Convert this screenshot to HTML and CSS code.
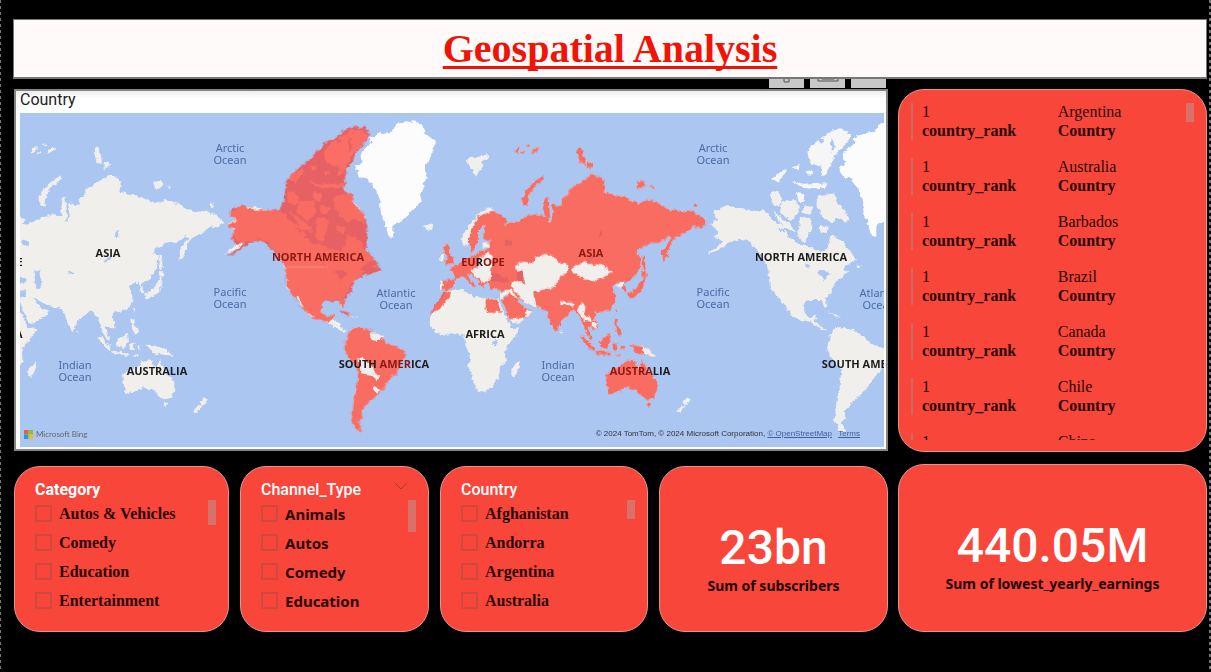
FILE: index.html
```
<!DOCTYPE html>
<html lang="en">
<head>
<meta charset="utf-8">
<title>Geospatial Analysis</title>
<link rel="stylesheet" href="styles.css">
</head>
<body>
<div class="page">
  <header class="banner"><h1>Geospatial Analysis</h1></header>
  <div class="tools">
    <button class="tool" type="button" aria-label="Filters"><svg viewBox="0 0 35 9"><path d="M15 0v3h5V0" fill="none" stroke="#555"/></svg></button>
    <button class="tool" type="button" aria-label="Focus mode"><svg viewBox="0 0 35 9"><path d="M8 0v2h20V0M12 0h12" fill="none" stroke="#555"/></svg></button>
    <button class="tool" type="button" aria-label="More options"></button>
  </div>
  <main class="board">
    <div class="left">
      <section class="map-panel">
        <h2 class="map-title">Country</h2>
        <div class="map">
          <svg class="map-art" viewBox="20 113 864 334" role="img" aria-label="World map with countries highlighted">
            <defs>
              <filter id="coast" x="20" y="113" width="864" height="334" filterUnits="userSpaceOnUse" color-interpolation-filters="sRGB">
                <feTurbulence type="fractalNoise" baseFrequency="0.22" numOctaves="3" seed="4"/>
                <feDisplacementMap in="SourceGraphic" scale="5" xChannelSelector="R" yChannelSelector="G"/>
              </filter>
              <path id="eurasia" d="M62 515L65 540 82 542 98 530 105 508 125 500 140 505 155 530 166 528 160 518 142 496 150 490 172 512 188 535 195 525 205 515 210 535 245 542 268 540 262 560 245 568 258 600 275 640 300 635 330 612 335 602 322 597 310 592 295 570 290 560 310 575 345 590 362 592 380 605 392 640 408 668 415 655 420 635 445 615 462 600 472 612 480 620 492 650 500 672 515 692 517 685 503 655 508 648 520 658 532 655 535 640 522 622 528 608 550 605 575 595 587 570 585 550 575 530 590 520 605 518 612 548 620 545 614 520 640 505 660 475 664 440 650 430 655 415 690 400 720 398 745 378 755 382 725 425 728 455 740 440 755 395 765 385 800 365 820 350 845 352 862 340 840 315 805 300 785 305 740 295 710 275 680 270 655 280 615 262 570 250 550 245 555 215 540 200 515 195 470 225 445 240 445 255 425 265 425 285 410 290 400 275 395 290 398 325 385 340 390 320 388 285 385 260 375 262 368 300 378 320 350 312 320 320 290 335 255 345 265 330 240 315 210 295 180 308 150 345 122 385 130 405 148 400 152 428 165 420 172 395 178 360 195 345 190 375 190 390 215 390 205 400 208 415 180 425 160 440 130 445 115 465 90 472 95 480 105 500 100 507Z"/>
              <path id="eurasia-isles" d="M70 408L85 405 90 430 104 455 98 462 75 462 80 440 70 425ZM470 125L480 108 490 125 488 135 498 150 495 165 478 155 475 140ZM500 155L520 160 515 172 500 178ZM312 290L304 270 316 243 345 213 370 197 373 208 346 228 327 257 325 288ZM648 215L670 213 680 225 655 237ZM685 226L702 230 700 238ZM822 281h8v8h-8ZM280 125L300 108 296 130ZM318 104L328 104 322 112ZM330 132L338 118 360 110 350 124ZM304 124h8v6h-8ZM620 553L640 543 655 528 665 510 680 498 674 515 667 542 650 557 628 566ZM662 495L670 480 682 492 672 504ZM667 438L675 438 677 480 668 478ZM586 598L592 596 590 610ZM579 625L590 628 590 645 600 655 606 670 595 676 585 650ZM480 678L495 682 524 715 520 724 505 712ZM525 722L575 728 572 738 528 730ZM537 695L555 682 570 672 573 692 562 713 542 711ZM577 700L597 698 587 708 592 720 579 720ZM626 703L650 706 665 710 690 720 707 738 680 734 650 730 640 718ZM600 705l8 4 4 10-8-2ZM585 736L605 732 600 740Z"/>
              <path id="australia" d="M555 795L575 782 600 770 615 755 635 748 648 755 645 768 660 775 668 745 675 765 690 790 712 815 712 840 700 865 680 868 660 855 650 838 640 840 620 832 595 845 565 850 562 830ZM678 878L694 878 686 895Z"/>
              <path id="south-america" d="M402 715L412 675 425 655 445 652 480 660 515 682 530 700 555 708 585 722 585 740 568 765 560 790 535 810 525 830 510 845 495 862 478 875 470 890 455 905 458 925 445 935 455 960 462 965 440 962 425 930 430 880 440 830 445 780 425 755 410 735Z"/>
              <g id="world">
                <g transform="translate(420 110) scale(.3333)">
                  <use href="#eurasia"/><use href="#eurasia-isles"/><use href="#australia"/>
                  <path d="M62 435L73 432 71 450 60 452ZM140 150L155 140 180 140 200 132 206 145 185 155 190 170 175 183 165 200 155 180 145 165ZM800 862L812 868 802 885 790 882ZM785 885L797 888 777 910 769 902ZM8 350L22 341 40 346 35 358 18 362Z"/>
                  <path d="M75 547L95 540 130 540 145 548 165 560 200 565 235 568 245 595 262 630 272 655 300 652 290 675 262 705 255 730 258 755 240 770 238 795 215 835 195 845 172 843 160 810 145 770 150 740 135 700 130 675 100 670 65 678 45 665 30 645 28 620 45 590 65 565ZM275 775L295 752 298 770 285 800 273 798ZM418 662l8 4-4 8Z"/>
                  <path class="sea" d="M210 513L205 500 222 490 245 498 270 512 250 518ZM290 485L308 482 308 500 316 522 304 538 292 518ZM216 692L232 690 228 708 218 704ZM256 388l22 8-4 12-20-4ZM540 360l8 2-4 18-8 2ZM500 450l26-14-4 10-20 10ZM390 486l24 2-10 6Z"/>
                </g>
                <g transform="translate(210 110) scale(.3333)">
                  <use href="#south-america"/>
                  <path class="ice" d="M438 170L460 155 450 145 455 125 485 100 480 85 510 70 545 65 560 42 600 32 635 40 645 70 678 95 670 120 655 150 645 175 650 205 640 215 645 235 630 250 635 275 610 300 575 335 550 345 550 380 535 380 525 340 512 310 510 270 498 240 470 205 445 200Z"/>
                </g>
                <g transform="translate(207 70) scale(.3333)">
                  <path d="M70 430L100 408 150 412 190 425 215 420 235 430 245 450 280 470 300 500 320 520 345 525 365 535 385 540 400 545 415 530 420 495 440 500 460 515 480 545 502 570 480 580 460 595 475 605 455 620 435 640 425 665 408 685 410 710 402 712 395 690 360 690 343 700 342 722 355 742 378 735 380 745 372 750 395 770 415 782 400 780 360 755 335 750 310 740 275 695 240 655 235 600 215 555 180 515 155 508 110 520 95 535 50 555 100 515 70 500 85 485 62 462 85 450Z"/>
                  <path class="arctic" d="M352 245L372 220 404 198 430 180 460 178 485 195 470 220 440 250 425 275 410 310 390 320 395 290 360 280ZM300 330L340 344 410 340 408 354 340 355ZM246 325L262 308 290 296 287 310 265 338ZM304 292L330 285 325 300ZM345 300L370 305 360 318ZM315 365L345 370 340 395 322 390Z"/>
                  <path d="M380 380L430 370 445 400 475 440 470 460 440 445 425 460 400 440 380 410ZM240 370L262 362 278 385 265 410 245 395ZM275 395L320 390 330 425 300 452 270 430ZM245 420l25 20 30 20 20 30-40-20ZM330 440L360 445 365 470 345 520 325 500ZM340 405l30 5-10 25-20-5ZM390 465l25 5-5 20-20-5ZM495 588L512 585 508 598ZM410 722L440 738 455 742 435 742Z"/>
                  <path class="sea" d="M355 495L385 480 412 500 414 530 395 543 370 530ZM380 605L405 600 425 612 408 620 402 635 392 615ZM290 500l18-8 10 16-16 2ZM262 474l24 4-6 10ZM335 548l28 6-8 8ZM345 580l16 6-8 10ZM384 200l20 10-8 12-8-6ZM425 200l10 30-8 20-4-24Z"/>
                </g>
              </g>
            </defs>
            <rect class="sea" x="20" y="113" width="864" height="334"/>
            <g filter="url(#coast)">
              <g class="land"><use href="#world" x="-483"/><use href="#world"/><use href="#world" x="483"/></g>
              <g class="highlight">
                <g transform="translate(420 110) scale(.3333)">
                  <use href="#eurasia"/><use href="#eurasia-isles"/><use href="#australia"/>
                  <path d="M92 545L90 562 62 590 60 600 45 605 30 612 45 585 62 560 70 548ZM197 567L232 569 243 608 197 608Z"/>
                </g>
                <g transform="translate(210 110) scale(.3333)">
                  <use href="#south-america"/>
                  <path d="M480 75L468 52 430 50 396 64 381 82 354 91 329 116 284 162 258 180 229 211 222 265 210 295 190 303 130 298 97 285 65 300 60 315 75 322 78 335 52 345 75 360 60 385 80 400 105 400 70 425 50 440 85 425 125 395 150 392 180 410 200 435 225 470 230 525 245 555 285 600 310 625 335 633 358 635 372 620 372 612 350 622 335 608 335 580 352 572 385 575 400 595 402 570 425 545 430 515 455 500 500 485 512 483 505 465 495 450 470 420 472 350 460 310 435 285 428 255 402 245 405 205 410 180 430 150 440 125 460 105ZM388 601L410 605 428 618 408 614ZM255 560l10 0 20 42-6-4Z"/>
                </g>
              </g>
              <g class="land">
                <g transform="translate(420 110) scale(.3333)">
                  <path d="M148 345L180 306 210 290 224 305 205 307 176 320 160 345 147 385 147 403 130 407 120 385ZM150 480L178 470 182 440 205 428 222 442 215 460 212 510 190 518 170 505ZM188 400L210 400 208 412 188 412ZM60 512L68 512 68 540 60 540Z"/>
                  <path d="M285 465L310 455 340 460 345 442 375 432 405 440 415 455 447 468 438 490 420 500 412 520 395 535 370 540 342 545 350 592 320 582 300 562 280 540 270 520 290 512 316 520 310 500 308 480 288 485ZM240 545L275 538 292 568 265 547 258 555 240 568ZM270 628L315 622 320 598 337 605 300 638 275 643Z"/>
                  <path d="M453 478L475 462 500 456 520 468 545 465 580 485 550 502 520 514 485 502 460 490ZM420 570L445 578 465 580 465 588 440 588 422 580ZM470 600L485 582 497 590 492 615 515 625 532 645 525 657 514 648 518 635 495 632 485 622ZM588 527L612 514 613 528 600 532ZM664 708L690 718 709 740 680 734 668 728Z"/>
                </g>
                <g transform="translate(210 110) scale(.3333)">
                  <path d="M482 666L500 668 520 682 505 694 485 690ZM445 745L460 740 470 755 490 770 492 785 508 800 500 812 485 795 452 790ZM495 828L512 838 500 850 492 842ZM357 640L368 627 390 638 390 650 410 664 400 666 380 650Z"/>
                </g>
              </g>
            </g>
            <path class="border-line" d="M287 267h41"/>
            <g class="continents">
              <text x="108" y="257">ASIA</text>
              <text x="157" y="375">AUSTRALIA</text>
              <text x="318" y="261" class="over">NORTH AMERICA</text>
              <text x="384" y="368">SOUTH<tspan class="over"> AMER</tspan>ICA</text>
              <text x="483" y="266"><tspan class="over">EU</tspan>R<tspan class="over">OPE</tspan></text>
              <text x="485" y="338">AFRICA</text>
              <text x="591" y="257" class="over">ASIA</text>
              <text x="640" y="375"><tspan class="over">AUSTRA</tspan>LIA</text>
              <text x="801" y="261">NORTH AMERICA</text>
              <text x="867" y="368">SOUTH AMERICA</text>
              <text x="1" y="266">EUROPE</text>
              <text x="3" y="338">AFRICA</text>
            </g>
            <g class="oceans">
              <text x="230" y="152">Arctic<tspan x="230" dy="12">Ocean</tspan></text>
              <text x="713" y="152">Arctic<tspan x="713" dy="12">Ocean</tspan></text>
              <text x="230" y="296">Pacific<tspan x="230" dy="12">Ocean</tspan></text>
              <text x="713" y="296">Pacific<tspan x="713" dy="12">Ocean</tspan></text>
              <text x="396" y="297">Atlantic<tspan x="396" dy="12">Ocean</tspan></text>
              <text x="879" y="297">Atlantic<tspan x="879" dy="12">Ocean</tspan></text>
              <text x="75" y="369">Indian<tspan x="75" dy="12">Ocean</tspan></text>
              <text x="558" y="369">Indian<tspan x="558" dy="12">Ocean</tspan></text>
            </g>
          </svg>
          <div class="credits">
            <span class="bing"><svg class="bing-logo" viewBox="0 0 10 10"><path fill="#d8683f" d="M0 0h5v5H0z"/><path fill="#8fba3f" d="M5 0h5v5H5z"/><path fill="#1a9fe8" d="M0 5h5v5H0z"/><path fill="#f2b81c" d="M5 5h5v5H5z"/></svg>Microsoft Bing</span>
            <span class="legal">© 2024 TomTom, © 2024 Microsoft Corporation, <a href="#osm">© OpenStreetMap</a> <a class="terms" href="#terms">Terms</a></span>
          </div>
        </div>
      </section>
      <div class="filters">
        <section class="card slicer">
          <div class="slicer-head"><h2 class="heavy">Category</h2></div>
          <div class="slicer-body">
            <div class="options serif">
              <label><input type="checkbox">Autos &amp; Vehicles</label>
              <label><input type="checkbox">Comedy</label>
              <label><input type="checkbox">Education</label>
              <label><input type="checkbox">Entertainment</label>
            </div>
            <span class="thumb mid"></span>
          </div>
        </section>
        <section class="card slicer">
          <div class="slicer-head"><h2>Channel_Type</h2>
            <button class="chevron" type="button" aria-label="Expand Channel_Type"><svg viewBox="0 0 14 8"><path d="M1 1l6 6 6-6" fill="none" stroke="#a0403a"/></svg></button>
          </div>
          <div class="slicer-body">
            <div class="options sans">
              <label><input type="checkbox">Animals</label>
              <label><input type="checkbox">Autos</label>
              <label><input type="checkbox">Comedy</label>
              <label><input type="checkbox">Education</label>
            </div>
            <span class="thumb long"></span>
          </div>
        </section>
        <section class="card slicer">
          <div class="slicer-head"><h2>Country</h2></div>
          <div class="slicer-body">
            <div class="options serif">
              <label><input type="checkbox">Afghanistan</label>
              <label><input type="checkbox">Andorra</label>
              <label><input type="checkbox">Argentina</label>
              <label><input type="checkbox">Australia</label>
            </div>
            <span class="thumb"></span>
          </div>
        </section>
        <section class="card kpi"><p class="value">23bn</p><p class="caption">Sum of subscribers</p></section>
      </div>
    </div>
    <div class="right">
      <section class="card ranks">
        <ul class="rank-list">
          <li><span>1</span><span>Argentina</span><b>country_rank</b><b>Country</b></li>
          <li><span>1</span><span>Australia</span><b>country_rank</b><b>Country</b></li>
          <li><span>1</span><span>Barbados</span><b>country_rank</b><b>Country</b></li>
          <li><span>1</span><span>Brazil</span><b>country_rank</b><b>Country</b></li>
          <li><span>1</span><span>Canada</span><b>country_rank</b><b>Country</b></li>
          <li><span>1</span><span>Chile</span><b>country_rank</b><b>Country</b></li>
          <li><span>1</span><span>China</span><b>country_rank</b><b>Country</b></li>
        </ul>
        <span class="thumb"></span>
      </section>
      <section class="card kpi"><p class="value">440.05M</p><p class="caption">Sum of lowest_yearly_earnings</p></section>
    </div>
  </main>
</div>
</body>
</html>
```
FILE: styles.css
```
* { box-sizing: border-box; }
body {
  margin: 0;
  background: #000;
  color: #2a0604;
  font-family: "Open Sans", "Noto Sans", sans-serif;
}
h1, h2, p, ul { margin: 0; padding: 0; }
.page {
  min-height: 100vh;
  padding: 19px 4px 32px 13px;
  background:
    repeating-linear-gradient(#777 0 3px, #000 3px 6px) left / 1px 100% no-repeat,
    repeating-linear-gradient(#777 0 3px, #000 3px 6px) right / 2px 100% no-repeat;
}
.banner {
  height: 60px;
  border: 1px solid #777;
  border-bottom-width: 2px;
  background: #fffafa;
  text-align: center;
}
.banner h1 {
  color: #f01408;
  font: bold 40px/57px "Liberation Serif", serif;
  text-decoration: underline;
  text-decoration-thickness: 3px;
  text-underline-offset: 4px;
  text-decoration-skip-ink: none;
}
.board {
  display: grid;
  grid-template-columns: 874fr 309fr;
  gap: 10px;
  padding-left: 1px;
}
.tools {
  display: flex;
  gap: 6px;
  height: 10px;
  width: 74%;
  justify-content: flex-end;
  padding-right: 11px;
}
.tool {
  width: 35px;
  height: 9px;
  padding: 0;
  border: 0;
  background: #c8c8c8;
}
.tool svg { display: block; width: 35px; height: 9px; }
.left, .right { display: flex; flex-direction: column; min-width: 0; }
.left { gap: 15px; }
.right { gap: 12px; }
.map-panel {
  padding: 0 2px 2px 4px;
  border: 2px solid #858585;
  background: linear-gradient(#eee, #fff 8px);
}
.map-title {
  color: #222;
  font: 400 16px/18px Roboto, sans-serif;
  padding-bottom: 4px;
}
.map { position: relative; }
.map-art { display: block; width: 100%; }
.sea { fill: #abc6f1; }
.land { fill: #f0efeb; }
.ice { fill: #fcfcfc; }
.arctic { fill: #f6f6f6; }
.highlight { fill: #fb3e31; opacity: 0.74; }
.border-line { stroke: #f78c80; }
.continents text {
  fill: #1c1c1c;
  font: bold 11px "Open Sans", sans-serif;
  text-anchor: middle;
}
.continents .over { fill: #8c1812; }
.oceans text {
  fill: #4a6ba6;
  font: 11px "Noto Sans", sans-serif;
  text-anchor: middle;
}
.credits {
  position: absolute;
  inset: auto 24px 8px 4px;
  display: flex;
  justify-content: space-between;
  align-items: center;
  color: #333;
  font: 8px/10px "Liberation Sans", sans-serif;
}
.bing { display: flex; gap: 3px; align-items: center; color: #666; font-family: Lato, sans-serif; }
.bing-logo { width: 9px; height: 9px; }
.legal a { color: #3f5f9f; }
.terms { margin-left: 4px; }
.filters {
  display: grid;
  grid-template-columns: 215fr 189fr 208fr 229fr;
  gap: 11px;
}
.card {
  min-width: 0;
  border: 1px solid #e0958c;
  border-radius: 26px;
  background: #f9463a;
}
.slicer { min-height: 166px; padding: 13px 12px 14px 20px; }
.slicer-head { display: flex; justify-content: space-between; }
.slicer-head h2 {
  color: #fff;
  font: 500 16px/19px Roboto, sans-serif;
}
.slicer-head .heavy { font-weight: 700; }
.chevron { width: 14px; height: 12px; margin-right: 8px; padding: 0; border: 0; background: none; }
.chevron svg { display: block; width: 14px; height: 8px; }
.slicer-body { display: flex; justify-content: space-between; }
.options label {
  display: flex;
  align-items: center;
  gap: 7px;
  height: 29px;
  white-space: nowrap;
}
.options input {
  appearance: none;
  width: 17px;
  height: 17px;
  margin: 0;
  border: 2px solid #d0493f;
}
.serif { font: bold 16px/18px "Liberation Serif", serif; }
.sans { font: bold 15px/18px "Noto Sans", sans-serif; }
.thumb {
  flex: none;
  width: 8px;
  height: 19px;
  margin-top: 1px;
  background: #d9716a;
}
.thumb.mid { height: 25px; }
.thumb.long { height: 32px; }
.kpi {
  display: flex;
  flex-direction: column;
  align-items: center;
  justify-content: center;
  min-height: 166px;
  padding-top: 18px;
}
.right .kpi { min-height: 168px; padding-top: 16px; }
.value { color: #fff; font: 500 48px/56px Roboto, sans-serif; }
.caption { color: #1c0403; font: bold 14px/20px "Noto Sans", sans-serif; }
.ranks {
  display: flex;
  flex: 1 1 0;
  gap: 12px;
  min-height: 0;
  padding: 13px 12px 11px;
}
.ranks .thumb { margin-top: 0; }
.rank-list {
  flex: 1;
  display: flex;
  flex-direction: column;
  gap: 18px;
  overflow: hidden;
  list-style: none;
  font: 16px/18px "Liberation Serif", serif;
}
.rank-list li {
  flex: none;
  display: grid;
  grid-template-columns: 133fr 122fr;
  gap: 1px 9px;
  padding-left: 9px;
  border-left: 2px solid #cf6a62;
}
```
